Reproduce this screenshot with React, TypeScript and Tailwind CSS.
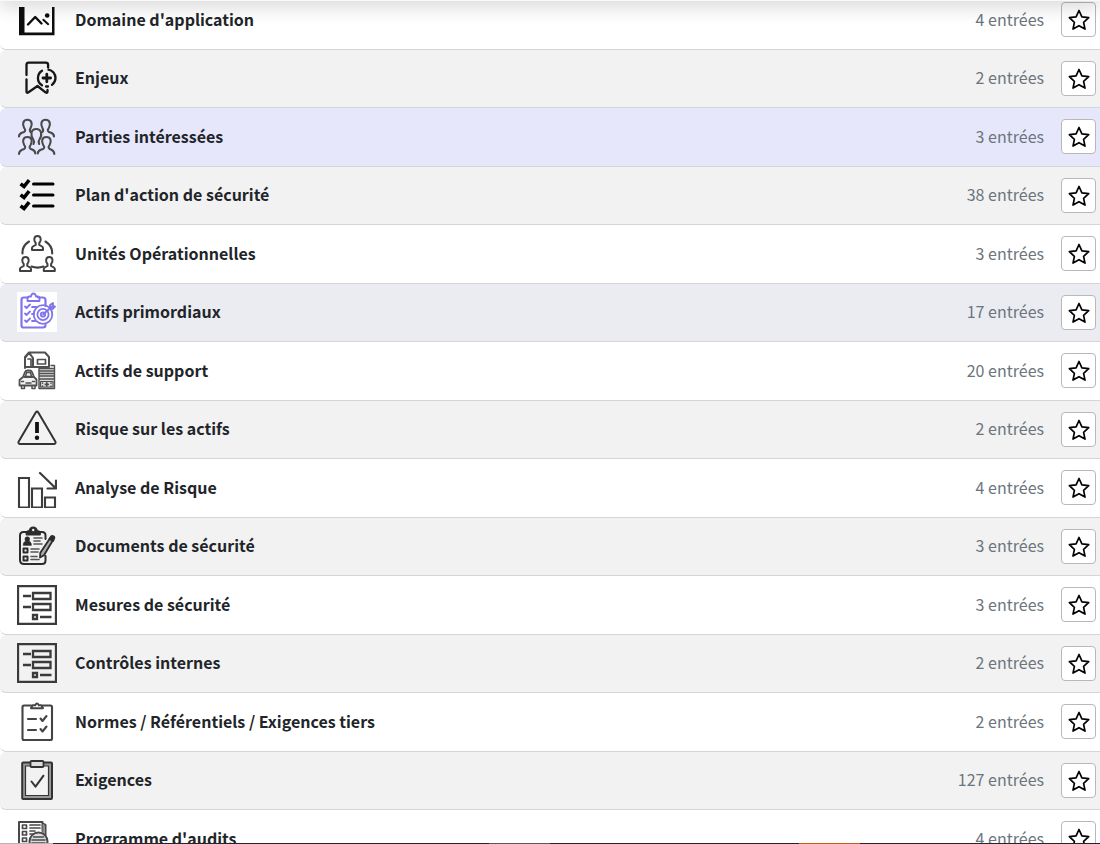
import type { ReactNode } from "react";

function Icon({ children, color = "text-[#2b2b2b]", bg = "" }: { children: ReactNode; color?: string; bg?: string }) {
  return (
    <svg viewBox="0 0 40 40" fill="none" stroke="currentColor" strokeWidth="1.800" strokeLinecap="round" strokeLinejoin="round" aria-hidden="true" className={`size-10 shrink-0 ${color} ${bg}`}>
      {children}
    </svg>
  );
}

const ScopeIcon = () => (
  <Icon color="text-[#0d0d0d]">
    <path d="M2 7h5.500v25.500H35V7h2.500v28.200H2z" fill="currentColor" stroke="none" />
    <path d="M11 24.500l7.200-7.500 6.300 6.500" strokeWidth="2.400" />
    <path d="M26.300 19.800l4.900 4.400" strokeWidth="2" />
    <circle cx="30.200" cy="15.500" r="2.300" fill="currentColor" stroke="none" />
  </Icon>
);

const BookmarkIcon = () => (
  <Icon color="text-[#161616]">
    <path d="M9.500 17V7q0-2.300 2.300-2.300h17q2.300 0 2.300 2.300v2.500M9.500 21.500v12q0 2 2 .8l9-6.300 8 6.300q2 1.200 2-.8v-1.500" strokeWidth="2.300" />
    <path d="M25 12.700a8.600 8.600 0 0 0 0 14.600M31.500 11.700a8.500 8.500 0 0 1 7 8.300q0 4-3.500 6.800M29 28.500h2" strokeWidth="2.300" />
    <path d="M29.800 16.200v7.600M26 20h7.600" strokeWidth="2.800" />
  </Icon>
);

const PeopleIcon = () => (
  <Icon color="text-[#4a4a4a]">
    <g strokeWidth="2.100">
      <path d="M2 19.500c0-3.500 3-3.500 5-4.500 2-1.200 1.200-2.500.2-4-2-3.500-1.500-8.200 3.200-8.200s5.200 4.700 3.200 8.200c-.8 1.500-1.500 2.500 0 4" />
      <path d="M37 19.500c0-3.500-3-3.500-5-4.500-2-1.200-1.200-2.500-.2-4 2-3.500 1.500-8.200-3.200-8.200s-5.200 4.700-3.200 8.200c.8 1.500 1.500 2.500 0 4" />
      <path d="M16.500 27c.8-1.500 1-2.500 0-4-3.300-4.500-3-11 2.700-11s6.300 6.500 3 11c-1 1.500-.8 2.500 0 4" />
      <path d="M2 37c0-4 3-4 5-5 2-1.200 1.200-2.500.2-4-2-3.500-1.500-8 3.200-8s5.200 4.500 3.200 8c-1 1.500-1.800 2.800.2 4 2 1 4.500 1 4.500 4.500" />
      <path d="M20.800 36.500c0-3.500 3.200-3.500 5.200-4.500 2-1.200 1.200-2.500.2-4-2-3.500-1.500-8 3.200-8s5.200 4.500 3.200 8c-1 1.500-1.800 2.800.2 4 2 1 4.500 1 4.500 5" />
    </g>
  </Icon>
);

const ChecklistIcon = () => (
  <Icon color="text-black">
    <path d="M16.500 9H36M16.500 20H36M16.500 31H36" strokeWidth="3" />
    <path d="M5 10l2 1.500L11 6.500M5 21l2 1.500 4-5M5 32l2 1.500 4-5" strokeWidth="3.600" strokeLinecap="square" strokeLinejoin="miter" />
  </Icon>
);

function Figure({ x, y }: { x: number; y: number }) {
  return (
    <path transform={`translate(${x} ${y})`} d="M-5.500 14.500v-2.200c0-1.500 2.500-2 3.700-2.800v-2c-2.200-2.300-2-7 1.800-7s4 4.700 1.800 7v2c1.200.8 3.700 1.300 3.700 2.800v2.200z" strokeWidth="2" />
  );
}

const UnitsIcon = () => (
  <Icon color="text-[#404040]">
    <Figure x={20.500} y={1.500} />
    <Figure x={8.500} y={22.500} />
    <Figure x={32.300} y={22.500} />
    <path d="M12 7.500Q5 12 5.500 19.500M28.500 7.500q7 4.500 6.700 12M14.500 32.500q6 2.200 12 0" strokeWidth="2.100" />
  </Icon>
);

const PrimaryAssetsIcon = () => (
  <Icon color="text-[#8074ea]" bg="bg-white">
    <path d="M11 5.500H7q-2.500 0-2.500 2.500v25.500q0 2 2 2h19.500q2.500 0 2.500-2.500M21 5.500h4.500q3 0 3 2.500v6" strokeWidth="2.200" />
    <path d="M10.500 9V6.500q0-2 2-2h1.500q.5-3 2.500-3t2.500 3h1.500q2 0 2 2V9z" />
    <path d="M8 14.500l1.500 1.500 3.500-3.500M8 21.500l1.500 1.500 3.500-3.500M8 28.500l1.500 1.500 3.500-3.500M15 15h5M15 22h2M15 29h3" />
    <circle cx="26" cy="22.500" r="9.300" />
    <circle cx="26" cy="22.500" r="5.600" />
    <circle cx="26" cy="22.500" r="2.200" />
    <path d="M26 22.500l9-8M33 16v-3l3-2v3.500h2l-2.500 2.500z" />
  </Icon>
);

const SupportAssetsIcon = () => (
  <Icon color="text-[#505050]">
    <path d="M22 17h15.500v20.500H22z" fill="#ddd" stroke="none" />
    <path d="M8 17V6l4-4.500h16L32 6v10H9M12 1.500L16 7v9M8 7l4-5 4 5" strokeWidth="2" />
    <path d="M11 8h3v8M20.500 8.500h8V13h-8z" strokeWidth="1.700" />
    <path d="M34 14.500h3.500v23H22V17.500h15M23 20h14M23 22.500h14M23 25h14M23 28h14" strokeWidth="1.400" />
    <path d="M23.500 30.500h12.500v5.500H23.500z" strokeWidth="1.200" />
    <path d="M29.800 31.800v3M28.300 33.300h3M25.500 32v.1M34 32v.1M25.500 35v.1M34 35v.1" strokeWidth="1.700" />
    <path d="M6 26l2-5q.6-1.500 2.500-1.500h2Q14.400 19.500 15 21l2 5 2.500 2.500v6h-17V29zM7.500 26h8" fill="#f2f2f2" strokeWidth="1.800" />
    <path d="M9.500 21.500h4l1 4h-6zM4.500 35v2.500h3V35M15 35v2.500h3V35M4.500 30.500h2M15.500 30.500h2M9 32h5" strokeWidth="1.500" />
  </Icon>
);

const WarningIcon = () => (
  <Icon color="text-[#333]">
    <path d="M18.700 3.600q1.300-2 2.600 0l17 28.800q1 2.200-1.300 2.600H3q-2.300-.4-1.300-2.600z" strokeWidth="2" />
    <path d="M20 13v11" stroke="#111" strokeWidth="3.800" strokeLinecap="butt" />
    <circle cx="20" cy="28.800" r="2.200" fill="#111" stroke="none" />
  </Icon>
);

const BarsIcon = () => (
  <Icon color="text-[#3d3d3d]">
    <path d="M2 10h10v29.500H2zM15 20.500h10v19H15zM28 29.500h10v10H28z" strokeWidth="2.100" strokeLinejoin="miter" />
    <path d="M23 5l15.500 15M39 12.500v8h-8.500" strokeWidth="2.200" />
  </Icon>
);

const DocumentsIcon = () => (
  <Icon color="text-[#2c2c2c]">
    <path d="M10 6H6.500Q3 6 3 9.500v24.500Q3 38 7 38h18q3.500 0 3.500-3.500V30M23 6h2q3.500 0 3.500 3.500V13" strokeWidth="2" />
    <path d="M9.500 8.500V7q0-2 3-2.200.8-3.500 3.700-3.500T20 4.800q3 .2 3 2.200v1.500z" fill="currentColor" />
    <circle cx="16.200" cy="4" r="1.200" fill="#eee" stroke="none" />
    <circle cx="10.300" cy="13" r="2.600" fill="currentColor" stroke="none" />
    <path d="M6.300 19q0-4 4-4t4 4z" fill="currentColor" strokeWidth=".8" />
    <path d="M17 12h8M17 15h6M17 18h8M14 23h8M14 26h7M14 30.500h6M14 33.500h8" stroke="#555" strokeWidth="1.600" />
    <path d="M6.500 22.500h4v4h-4zM6.500 30.500h4v4h-4z" strokeWidth="2" />
    <path d="M33.500 11.500l3 1.700-9.500 16-4 2.300.3-4.800z" fill="#aaa" strokeWidth="1.800" />
    <path d="M32.500 13l2-2.800q2.500-.5 2.800 1.500L36 15z" fill="currentColor" strokeWidth="2" />
  </Icon>
);

const FormIcon = () => (
  <Icon color="text-[#3b3b3b]">
    <g strokeLinejoin="miter" strokeLinecap="butt" strokeWidth="2.300">
      <path d="M1 1h38v38H1z" />
      <path d="M16 8h17.500v6H16zM16 19h17.500v6H16zM16 30h4v4h-4z" />
      <path d="M6 11h8M6 22h8M23 32h11.500" />
    </g>
  </Icon>
);

const StandardsIcon = () => (
  <Icon color="text-[#444]">
    <path d="M14 3.500H7Q5.500 3.500 5.500 5v31.500Q5.500 38 7 38h26.500q1.500 0 1.500-1.500V5q0-1.500-1.500-1.500H26" strokeWidth="2.100" />
    <path d="M14 6.200l1.500-3h2.700q1.800-3.400 3.600 0h2.700l1.500 3z" strokeWidth="2" />
    <path d="M11 17h8M11 28h8M23.500 16.500l2 2.500 4-5M23.500 27l2 2.500 4-5" strokeWidth="2.100" />
  </Icon>
);

const RequirementsIcon = () => (
  <Icon color="text-[#333]">
    <rect x="5.200" y="2.500" width="29.800" height="36.500" rx="1" fill="#999" strokeWidth="2" />
    <path d="M8.500 6h23v29.500h-23z" fill="#f2f2f2" strokeWidth="1.200" />
    <rect x="13.500" y="1" width="13" height="6" rx="1" fill="#ddd" strokeWidth="1.800" />
    <path d="M14.500 21.500l4 5.200 8-11" strokeWidth="2" />
  </Icon>
);

const AuditIcon = () => (
  <Icon color="text-[#484848]">
    <path d="M2 39V3h23.500v9M25.500 4.500l3 1.500v14" strokeWidth="2" />
    <path d="M26.500 6v8" stroke="#888" strokeWidth="2" />
    <path d="M5.500 6h4v3.500h-4zM5.500 12.500h4V16h-4zM5.500 19h4v3.500h-4zM5.500 25.500h4V29h-4zM13 6h10M13 9h10M13 12h5M13 15h3" strokeWidth="1.700" />
    <circle cx="21.500" cy="22.500" r="9" fill="#ddd" strokeWidth="2" />
    <path d="M16.500 18h10M15 21h13M15 24h13M16.500 27h10" strokeWidth="1.500" />
  </Icon>
);

const entries: { name: string; count: number; icon: ReactNode; bg?: string }[] = [
  { name: "Domaine d'application", count: 4, icon: <ScopeIcon /> },
  { name: "Enjeux", count: 2, icon: <BookmarkIcon /> },
  { name: "Parties intéressées", count: 3, icon: <PeopleIcon />, bg: "bg-[#e7e7fc]" },
  { name: "Plan d'action de sécurité", count: 38, icon: <ChecklistIcon /> },
  { name: "Unités Opérationnelles", count: 3, icon: <UnitsIcon /> },
  { name: "Actifs primordiaux", count: 17, icon: <PrimaryAssetsIcon />, bg: "bg-[#ebecf2]" },
  { name: "Actifs de support", count: 20, icon: <SupportAssetsIcon /> },
  { name: "Risque sur les actifs", count: 2, icon: <WarningIcon /> },
  { name: "Analyse de Risque", count: 4, icon: <BarsIcon /> },
  { name: "Documents de sécurité", count: 3, icon: <DocumentsIcon /> },
  { name: "Mesures de sécurité", count: 3, icon: <FormIcon /> },
  { name: "Contrôles internes", count: 2, icon: <FormIcon /> },
  { name: "Normes / Référentiels / Exigences tiers", count: 2, icon: <StandardsIcon /> },
  { name: "Exigences", count: 127, icon: <RequirementsIcon /> },
  { name: "Programme d'audits", count: 4, icon: <AuditIcon /> },
];

function StarButton({ name }: { name: string }) {
  return (
    <button type="button" aria-label={`Ajouter ${name} aux favoris`} className="mt-0.5 flex size-[35px] shrink-0 items-center justify-center self-start rounded border border-[#b8b8b8] bg-white text-black group-even:mt-[3px]">
      <svg viewBox="0 0 24 24" className="size-6" fill="none" stroke="currentColor" strokeWidth="1.700" strokeLinejoin="round" aria-hidden="true">
        <path d="M12 2.500l2.900 6.400 6.800.8-5.100 4.600 1.400 6.800-6-3.400-6 3.400 1.400-6.800L2.300 9.700l6.800-.8z" />
      </svg>
    </button>
  );
}

export default function App() {
  return (
    <div className="flex h-screen flex-col overflow-hidden bg-white font-['Noto_Sans_CJK_SC',sans-serif] text-base text-[#212529]">
      <header className="z-10 -mt-[55px] h-14 shrink-0 bg-[#f8f8f8] shadow-[0_8px_16px_rgba(0,0,0,0.13)]" />
      <main className="min-h-0 flex-1 overflow-hidden">
        <ul className="-mt-2.5">
          {entries.map(({ name, count, icon, bg }) => (
            <li key={name} className={`group rounded-l-md border-b border-[#d5d5d5] pr-1 pb-[9px] pl-[17px] odd:pt-[9px] even:pt-2 ${bg ?? "even:bg-[#f2f2f2]"}`}>
              <div className="flex h-10 items-center">
                {icon}
                <a href="#" className="ml-[18px] min-w-0 flex-1 truncate pb-0.5 font-bold">{name}</a>
                <span className="mr-[17px] pb-0.5 text-[#6c757d]">{count} entrées</span>
                <StarButton name={name} />
              </div>
            </li>
          ))}
        </ul>
      </main>
      <footer className="flex h-px shrink-0 bg-[#26242a]">
        <div className="w-[53px] bg-[#b5b5b5]" />
        <div className="ml-[436px] w-[61px] bg-[#5a585c]" />
        <div className="ml-[249px] w-[61px] bg-[#c06018]" />
      </footer>
    </div>
  );
}
